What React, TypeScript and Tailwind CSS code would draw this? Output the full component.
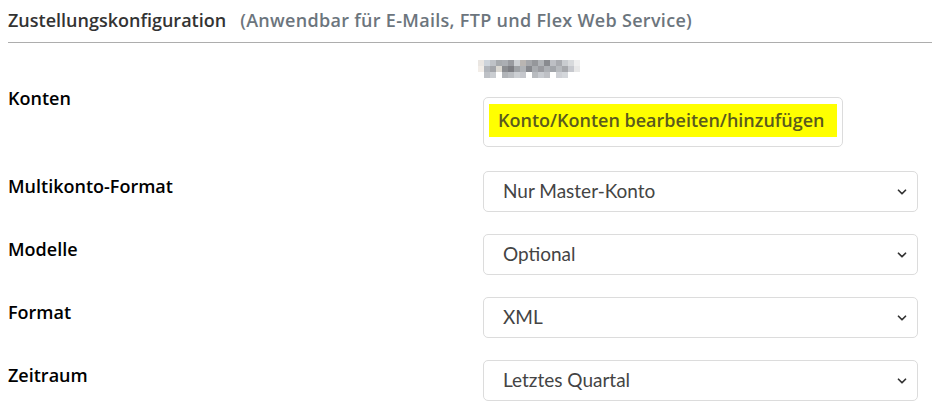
import { ChevronDown } from 'lucide-react'

const blurCells = [
  '#e8e4df', '#c9d0d8', '#b9bcc1', '#9ea1a6', '#a3a6ab', '#8f9196', '#c8cbd0', '#b2adaa', '#9c9ea3', '#8a8c91', '#a8abb0', '#7d7f84', '#b6b9be', '#a0a3a8', '#c4c7cc', '#d4d6d9', '#eeeeee',
  '#f1ece6', '#a9aeb4', '#9a9ca1', '#d8d4ce', '#7f8186', '#6f7176', '#95989d', '#a7aaaf', '#7a7c81', '#9fa2a7', '#8e9095', '#a4a7ac', '#999ca1', '#b0b3b8', '#9d9fa4', '#c1c4c9', '#e6e6e6',
  '#ffffff', '#b8bbc0', '#c5c8cd', '#ffffff', '#a9acb1', '#b3b6bb', '#c7cacf', '#bfc2c7', '#ffffff', '#b1b4b9', '#c3c6cb', '#b7babf', '#ffffff', '#c9ccd1', '#d0d3d8', '#ffffff', '#ffffff',
]

const selects = [
  { label: 'Multikonto-Format', value: 'Nur Master-Konto' },
  { label: 'Modelle', value: 'Optional' },
  { label: 'Format', value: 'XML' },
  { label: 'Zeitraum', value: 'Letztes Quartal' },
]

const SelectBox = ({ value }: { value: string }) => (
  <div className="flex h-[41px] w-[435px] items-center justify-between rounded-[5px] border border-[#dcdcdc] bg-white pl-[19px] pr-[8px] font-['Lato',sans-serif] text-[19px] text-[#444]">
    <span>{value}</span>
    <ChevronDown size={14} strokeWidth={3} className="text-[#333]" />
  </div>
)

const App = () => {
  return (
    <div className="min-h-[412px] w-[932px] bg-white pl-2 font-['Open_Sans',sans-serif]">
      <div className="flex h-[43px] items-center gap-[14px] border-b border-[#adadad] pb-[2px]">
        <span className="text-[18px] font-semibold text-[#333]">Zustellungskonfiguration</span>
        <span className="text-[18px] font-semibold tracking-[0.3px] text-[#6c757d]">
          (Anwendbar für E-Mails, FTP und Flex Web Service)
        </span>
      </div>

      <div className="flex pt-[17px]">
        <div className="w-[475px] pt-[25px] text-[18px] font-semibold text-black">Konten</div>
        <div className="flex flex-col">
          <div className="ml-[-5px] grid w-[102px] grid-cols-[repeat(17,6px)] opacity-90">
            {blurCells.map((c, i) => (
              <div key={i} className="h-[6px]" style={{ background: c }} />
            ))}
          </div>
          <div className="mt-[19px] w-[360px] rounded-[5px] border border-[#dcdcdc] px-[5px] pt-[6px] pb-[9px]">
            <div className="flex h-[33px] items-center bg-[#ffff00] px-[9px] text-[18px] font-semibold text-[#5a5a1e]">
              Konto/Konten bearbeiten/hinzufügen
            </div>
          </div>
        </div>
      </div>

      <div className="mt-[24px] flex flex-col gap-[22px]">
        {selects.map((s) => (
          <div key={s.label} className="flex">
            <div className="w-[475px] pt-[2px] text-[18px] font-semibold text-black">{s.label}</div>
            <SelectBox value={s.value} />
          </div>
        ))}
      </div>
    </div>
  )
}

export default App
